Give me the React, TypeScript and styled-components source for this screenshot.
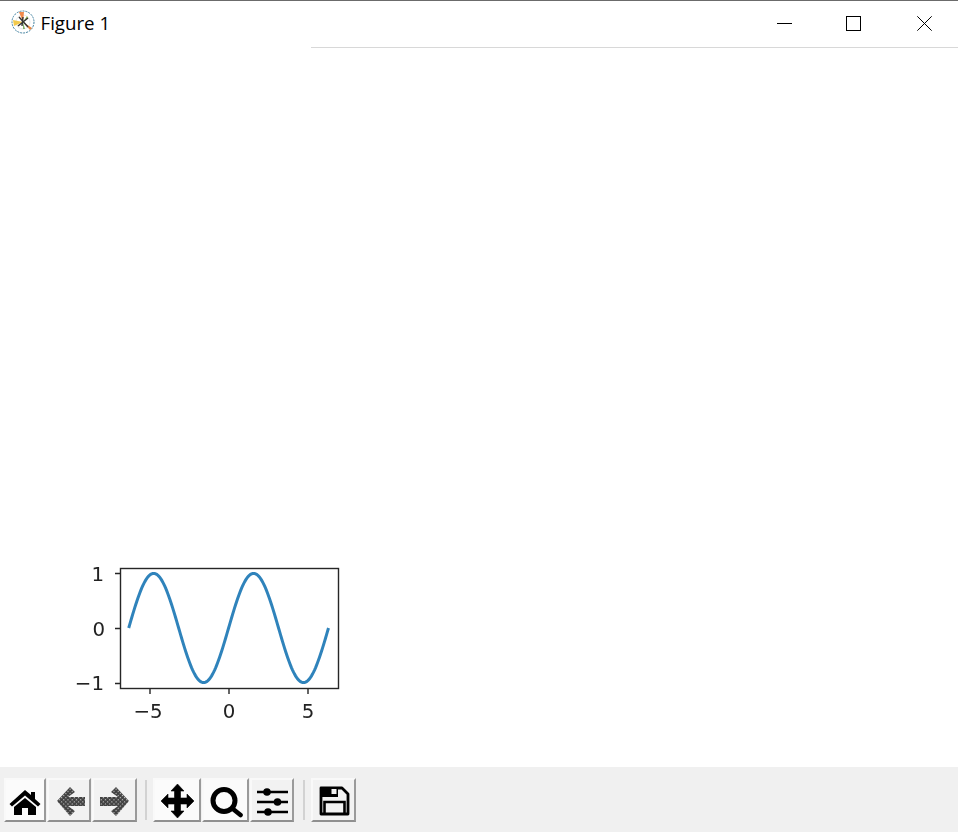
import React from "react";
import styled, { createGlobalStyle } from "styled-components";

const Global = createGlobalStyle`
  html, body { margin: 0; padding: 0; background: #fff; }
  #root { width: 958px; height: 832px; }
`;

const Win = styled.div`
  width: 958px;
  height: 832px;
  display: flex;
  flex-direction: column;
  overflow: hidden;
  background: #fff;
`;

const TitleBar = styled.header`
  height: 47px;
  box-sizing: border-box;
  border-top: 1px solid #6b6b6b;
  display: flex;
  align-items: center;
  justify-content: space-between;
  flex: none;
`;

const TitleGroup = styled.div`
  display: flex;
  align-items: center;
  padding-left: 11px;
  margin-bottom: 4px;
`;

const AppIcon = styled.svg`
  width: 24px;
  height: 24px;
  flex: none;
`;

const Title = styled.span`
  margin-left: 5.5px;
  font-family: "Open Sans", "Noto Sans", sans-serif;
  font-size: 18.7px;
  color: #000;
`;

const WinButton = styled.div<{ $w: number }>`
  width: ${(p) => p.$w}px;
  height: 46px;
  display: flex;
  align-items: center;
  justify-content: center;
  flex: none;
`;

const WinControls = styled.div`
  display: flex;
`;

const RuleRow = styled.div`
  height: 1px;
  flex: none;
  display: flex;
  justify-content: flex-end;
`;

const Rule = styled.div`
  width: 647px;
  background: #d8d8d8;
`;

const Canvas = styled.main`
  flex: 1;
  display: flex;
  flex-direction: column;
  justify-content: flex-end;
  padding-bottom: 27px;
  padding-left: 64px;
`;

const Plot = styled.svg`
  display: block;
  width: 290px;
  height: 176px;
  filter: blur(0.4px);
  text {
    font-family: "DejaVu Sans", sans-serif;
    font-size: 19.8px;
    fill: #222;
  }
`;

const Toolbar = styled.footer`
  height: 65px;
  flex: none;
  background: #f0f0f0;
  display: flex;
  align-items: flex-start;
  padding: 11px 0 0 4px;
  box-sizing: border-box;
`;

const ToolButton = styled.div<{ $w: number; $active?: boolean }>`
  width: ${(p) => p.$w}px;
  height: 44px;
  box-sizing: border-box;
  margin-right: 1px;
  background: ${(p) => (p.$active ? "#fbfbfb" : "#f2f2f2")};
  border-top: 2px solid #f9f9f9;
  border-left: 2px solid #f9f9f9;
  border-right: 2px solid #9a9a9a;
  border-bottom: 2px solid #8f8f8f;
  display: flex;
  align-items: center;
  justify-content: center;
  flex: none;
`;

const Sep = styled.div<{ $ml: number }>`
  width: 2px;
  height: 40px;
  background: #d2d2d2;
  margin: 2px 6px 0 ${(p) => p.$ml}px;
  flex: none;
`;

const Glyph = styled.svg`
  width: 36px;
  height: 36px;
  flex: none;
  filter: blur(0.55px);
`;

const sinePath = () => {
  const pts: string[] = [];
  for (let i = 0; i <= 200; i++) {
    const x = -2 * Math.PI + (4 * Math.PI * i) / 200;
    pts.push(`${(164.6 + 15.9 * x).toFixed(2)},${(64 - 54.6 * Math.sin(x)).toFixed(2)}`);
  }
  return `M${pts.join("L")}`;
};

export default function App() {
  return (
    <Win>
      <Global />
      <TitleBar>
        <TitleGroup>
          <AppIcon viewBox="0 0 24 24">
            <circle cx="12" cy="12" r="11" fill="#fff" stroke="#3f7f9f" strokeWidth="1" strokeDasharray="2 1" />
            <circle cx="12" cy="12" r="7" fill="none" stroke="#e8e8e8" />
            <path d="M12 12 L8 2 L13 2Z" fill="#f08a4b" />
            <path d="M12 12 L2 10 L3 16Z" fill="#f2c94c" />
            <path d="M12 12 L19 20 L21 18Z" fill="#e8843c" />
            <path d="M12 12 L16 6 L17 8Z" fill="#8fb84f" />
            <path d="M12 12 L12 19 L14 19Z" fill="#7fb069" />
            <path d="M8 7 L17 17 M17 8 L7 16 M12 7 L11 16" stroke="#333" strokeWidth="1.4" />
          </AppIcon>
          <Title>Figure 1</Title>
        </TitleGroup>
        <WinControls>
          <WinButton $w={63}>
            <svg width="15" height="16" viewBox="0 0 15 16"><path d="M0 7.5H15" stroke="#000" /></svg>
          </WinButton>
          <WinButton $w={75}>
            <svg width="15" height="16" viewBox="0 0 15 16"><rect x=".5" y=".5" width="14" height="14" fill="none" stroke="#000" /></svg>
          </WinButton>
          <WinButton $w={67}>
            <svg width="15" height="16" viewBox="0 0 15 16"><path d="M.3 .3L14.7 14.7M14.7 .3L.3 14.7" stroke="#000" /></svg>
          </WinButton>
        </WinControls>
      </TitleBar>
      <RuleRow><Rule /></RuleRow>
      <Canvas>
        <Plot viewBox="0 0 290 176">
          <rect x="56.5" y="4.5" width="218" height="120" fill="#fff" stroke="#262626" strokeWidth="1.4" />
          <path d={sinePath()} fill="none" stroke="#2f83bb" strokeWidth="3" />
          <path d="M51 9.5H56M51 64.5H56M51 119.5H56M86 125V130M165 125V130M244 125V130" stroke="#262626" strokeWidth="1.4" />
          <text x="40" y="16.5" textAnchor="end">1</text>
          <text x="41" y="72" textAnchor="end">0</text>
          <text x="40" y="126" textAnchor="end">−1</text>
          <text x="84" y="154" textAnchor="middle">−5</text>
          <text x="165" y="154" textAnchor="middle">0</text>
          <text x="244" y="154" textAnchor="middle">5</text>
        </Plot>
      </Canvas>
      <Toolbar>
        <ToolButton $w={42} $active>
          <Glyph viewBox="0 0 36 36"><path d="M18 8 L24 13 V10 H28 V17 L33.5 22 L31 24.5 L18 13.5 L5 24.5 L2.5 22Z M18 16 L29 25 V33 H21 V26 H15 V33 H7 V25Z" fill="#000" /></Glyph>
        </ToolButton>
        <ToolButton $w={44}>
          <Glyph viewBox="0 0 36 36">
            <defs>
              <pattern id="dith" width="3" height="3" patternUnits="userSpaceOnUse" patternTransform="rotate(45)">
                <rect width="3" height="3" fill="#404040" />
                <rect width="1.2" height="1.2" fill="#c8c8c8" />
              </pattern>
            </defs>
            <path d="M6 19 L19 5 L24 10 L17 15 H34 V24 H17 L24 29 L19 34Z" fill="url(#dith)" />
          </Glyph>
        </ToolButton>
        <ToolButton $w={45}>
          <Glyph viewBox="0 0 36 36"><path d="M32 19 L19 5 L14 10 L21 15 H3 V24 H21 L14 29 L19 34Z" fill="url(#dith)" /></Glyph>
        </ToolButton>
        <Sep $ml={7} />
        <ToolButton $w={48} $active>
          <Glyph viewBox="0 0 36 36"><path d="M18.5 2 L25 9 H21.5 V16 H28 V12 L35 19 L28 26 V22 H21.5 V29 H25 L18.5 36 L12 29 H15.5 V22 H9 V26 L2 19 L9 12 V16 H15.5 V9 H12Z" fill="#000" strokeLinejoin="round" stroke="#000" strokeWidth=".6" /></Glyph>
        </ToolButton>
        <ToolButton $w={47} $active>
          <Glyph viewBox="0 0 36 36"><circle cx="16" cy="18.5" r="11" fill="none" stroke="#000" strokeWidth="5" /><path d="M25 27 L32.5 33" stroke="#000" strokeWidth="4.6" strokeLinecap="round" /></Glyph>
        </ToolButton>
        <ToolButton $w={44}>
          <Glyph viewBox="0 0 36 36"><path d="M3 10H34M3 20H34M3 30H34" stroke="#000" strokeWidth="2.6" /><circle cx="13" cy="10" r="3.8" /><circle cx="23.5" cy="20" r="3.8" /><circle cx="14" cy="30" r="3.8" /></Glyph>
        </ToolButton>
        <Sep $ml={8} />
        <ToolButton $w={45}>
          <Glyph viewBox="0 0 36 36"><path d="M5 6 H26 L32 12 V32 H5 Z" fill="none" stroke="#000" strokeWidth="2.8" strokeLinejoin="round" /><path d="M5.5 7 H22 V15 H5.5Z" fill="#000" /><rect x="15.5" y="7" width="5" height="5" fill="#f2f2f2" /><path d="M8.5 32 V20 H28.5 V32" fill="none" stroke="#000" strokeWidth="2.6" /></Glyph>
        </ToolButton>
      </Toolbar>
    </Win>
  );
}
